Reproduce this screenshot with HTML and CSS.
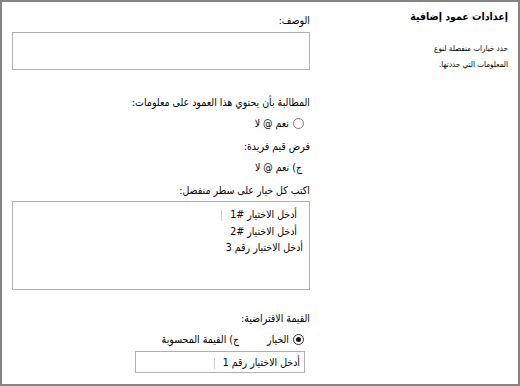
FILE: index.html
```html
<!DOCTYPE html>
<html lang="ar" dir="rtl">
<head>
  <meta charset="UTF-8">
  <title>إعدادات عمود إضافية</title>
  <link rel="stylesheet" href="styles.css">
</head>
<body>
  <div class="frame">
    <div class="side">
      <div class="side-title">إعدادات عمود إضافية</div>
      <div class="side-text">حدد خيارات منفصلة لنوع<br>المعلومات التي حددتها.</div>
    </div>
    <div class="main">
      <div class="label first">الوصف:</div>
      <div class="box desc"></div>

      <div class="label req">المطالبة بأن يحتوي هذا العمود على معلومات:</div>
      <div class="radio-row">
        <span class="radio"></span>
        <span>نعم @ لا</span>
      </div>

      <div class="label">فرض قيم فريدة:</div>
      <div class="radio-row plain">
        <span>ج) نعم @ لا</span>
      </div>

      <div class="label">اكتب كل خيار على سطر منفصل:</div>
      <div class="box choices">
        <div class="line l1">أدخل الاختيار #1<span class="caret"></span></div>
        <div class="line l2">أدخل الاختيار #2</div>
        <div class="line l3">أدخل الاختيار رقم 3</div>
      </div>

      <div class="label def">القيمة الافتراضية:</div>
      <div class="radio-row">
        <span class="radio on"></span>
        <span class="opt">الخيار</span>
        <span>ج) القيمة المحسوبة</span>
      </div>
      <div class="box value">أدخل الاختيار رقم 1<span class="caret"></span></div>
    </div>
  </div>
</body>
</html>
```

FILE: styles.css
```css
  html, body {
    margin: 0;
    background: #fff;
  }
  body {
    font-family: 'DejaVu Sans Condensed', 'DejaVu Sans', sans-serif;
    font-size: 10.5px;
    color: #000;
  }
  .frame {
    width: 520px;
    height: 386px;
    box-sizing: border-box;
    border: 2px solid #858585;
    display: flex;
    direction: rtl;
  }
  .side {
    width: 208px;
    box-sizing: border-box;
    padding: 7px 10px 0 0;
  }
  .side-title {
    font-size: 10.5px;
    font-weight: bold;
    line-height: 14px;
  }
  .side-text {
    margin-top: 18px;
    font-size: 8px;
    line-height: 16px;
  }
  .main {
    width: 300px;
    box-sizing: border-box;
  }
  .label {
    line-height: 16px;
    margin-top: 3px;
  }
  .label.first {
    margin-top: 10px;
  }
  .box {
    border: 1px solid #b0b0b0;
    box-sizing: border-box;
    margin-left: 2px;
  }
  .desc {
    height: 38px;
    margin-top: 4px;
  }
  .label.req {
    margin-top: 24px;
  }
  .radio-row {
    display: flex;
    align-items: center;
    gap: 4px;
    height: 24px;
    margin-top: 1px;
    padding-right: 6px;
  }
  .radio-row.plain {
    padding-right: 8px;
  }
  .radio {
    width: 9px;
    height: 9px;
    border: 1px solid #7a7a7a;
    border-radius: 50%;
    display: flex;
    align-items: center;
    justify-content: center;
  }
  .radio.on {
    border-color: #333;
  }
  .radio.on::after {
    content: "";
    width: 5px;
    height: 5px;
    border-radius: 50%;
    background: #111;
  }
  .opt {
    margin-left: 24px;
  }
  .choices {
    height: 89px;
    margin-top: 3px;
    padding: 4px 12px 0 0;
  }
  .line {
    line-height: 16.5px;
  }
  .l3 {
    margin-right: -6px;
  }
  .caret {
    display: inline-block;
    width: 1px;
    height: 11px;
    background: #ccc;
    margin-right: 8px;
    vertical-align: middle;
  }
  .label.def {
    margin-top: 20px;
  }
  .value {
    width: 170px;
    height: 22px;
    margin-right: 5px;
    line-height: 20px;
    padding-right: 4px;
  }
```
